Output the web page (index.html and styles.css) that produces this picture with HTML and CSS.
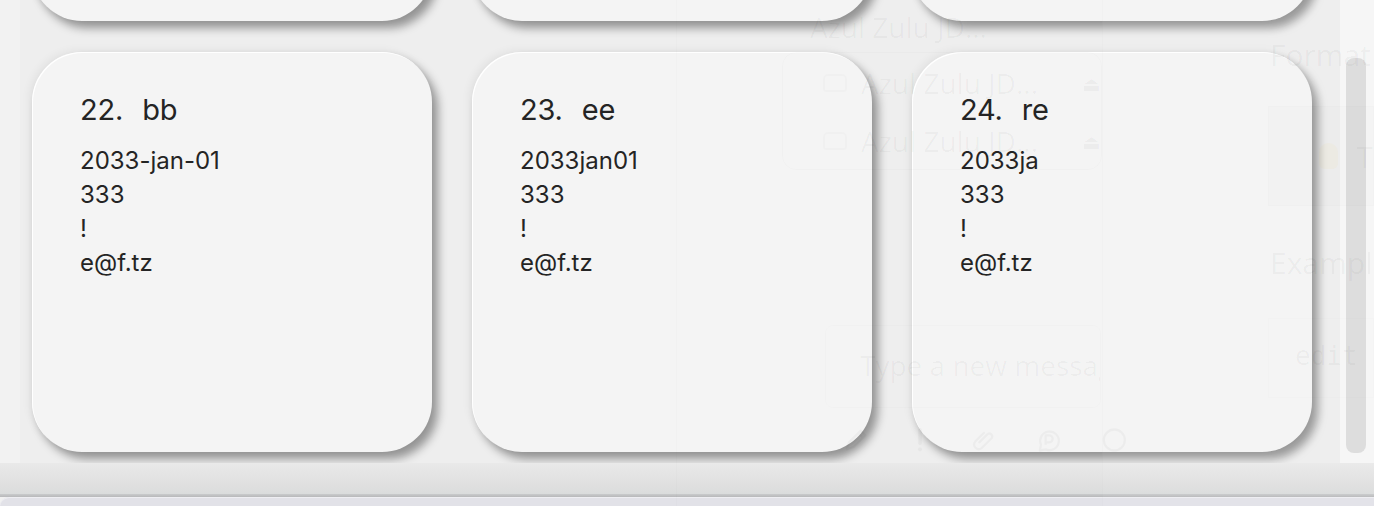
FILE: index.html
```html
<!DOCTYPE html>
<html lang="en">
<head>
<meta charset="utf-8">
<title>Cards</title>
<link rel="stylesheet" href="styles.css">
</head>
<body>
<div class="app">
  <div class="viewport">
    <div class="gutter"></div>
    <div class="scroller">
      <div class="grid">
        <div class="card"></div>
        <div class="card"></div>
        <div class="card"></div>
        <div class="card">
          <div class="title"><span class="num">22.</span><span>bb</span></div>
          <div class="line">2033-jan-01</div>
          <div class="line">333</div>
          <div class="line">!</div>
          <div class="line">e@f.tz</div>
        </div>
        <div class="card">
          <div class="title"><span class="num">23.</span><span>ee</span></div>
          <div class="line">2033jan01</div>
          <div class="line">333</div>
          <div class="line">!</div>
          <div class="line">e@f.tz</div>
        </div>
        <div class="card">
          <div class="title"><span class="num">24.</span><span>re</span></div>
          <div class="line">2033ja</div>
          <div class="line">333</div>
          <div class="line">!</div>
          <div class="line">e@f.tz</div>
        </div>
      </div>
    </div>
    <div class="track"><div class="thumb"></div></div>
  </div>
  <div class="band"></div>
  <div class="rule"></div>
  <div class="tray"></div>

  <div class="ghost">
    <div class="g-divider"></div>
    <div class="g-pane"></div>
    <div class="g-list">
      <div class="g-row g-first">Azul Zulu JD...</div>
      <div class="g-box">
        <div class="g-row"><span class="g-drive"></span>Azul Zulu JD...<span class="g-eject">⏏</span></div>
        <div class="g-row"><span class="g-drive"></span>Azul Zulu JD...<span class="g-eject">⏏</span></div>
      </div>
    </div>
    <div class="g-format">Format</div>
    <div class="g-tip"><span class="g-bulb"></span><span class="g-t">T</span></div>
    <div class="g-example">Example</div>
    <div class="g-edit">edit</div>
    <div class="g-input">Type a new message</div>
    <div class="g-tools">
      <svg viewBox="0 0 24 24" width="28" height="28"><path d="M4 20 L6 14 L16 4 L20 8 L10 18 Z M14 6 L18 10" fill="none" stroke="currentColor" stroke-width="2" stroke-linejoin="round"/></svg>
      <svg viewBox="0 0 24 24" width="28" height="28"><path d="M12 3 L12 15" stroke="currentColor" stroke-width="3" stroke-linecap="round"/><circle cx="12" cy="20" r="1.8" fill="currentColor"/></svg>
      <svg viewBox="0 0 24 24" width="28" height="28"><path d="M8 14 L15 7 a2.5 2.5 0 0 1 3.5 3.5 L10 19 a4 4 0 0 1 -5.6 -5.6 L12 5.8" fill="none" stroke="currentColor" stroke-width="2" stroke-linecap="round"/></svg>
      <svg viewBox="0 0 24 24" width="28" height="28"><path d="M5 21 L6 16 A8 8 0 1 1 10 20 Z M10 16 L10 8 h3 a3 3 0 0 1 0 6 h-3" fill="none" stroke="currentColor" stroke-width="2" stroke-linejoin="round"/></svg>
      <svg viewBox="0 0 24 24" width="28" height="28"><circle cx="14" cy="12" r="9" fill="none" stroke="currentColor" stroke-width="2"/></svg>
    </div>
  </div>
</div>
</body>
</html>
```

FILE: styles.css
```css
* { box-sizing: border-box; }

html, body {
  margin: 0;
  padding: 0;
}

body {
  width: 1374px;
  height: 506px;
  overflow: hidden;
  background: #f1f1f1;
  font-family: Inter, "Liberation Sans", sans-serif;
  color: #242424;
}

.app {
  position: relative;
  display: flex;
  flex-direction: column;
  height: 506px;
}

.viewport {
  display: flex;
  height: 463px;
  flex: none;
}

.gutter {
  width: 20px;
  flex: none;
  background: #f2f2f2;
}

.scroller {
  flex: 1;
  overflow: hidden;
  background: #eeeeee;
  padding-left: 12px;
}

.grid {
  display: grid;
  grid-template-columns: repeat(3, 400px);
  column-gap: 40px;
  row-gap: 31px;
  margin-top: -379px;
}

.card {
  height: 400px;
  background: #f4f4f4;
  border-radius: 50px;
  padding: 41px 48px;
  box-shadow:
    inset 1px 1px 0 rgba(255, 255, 255, 0.95),
    6px 7px 10px rgba(0, 0, 0, 0.38),
    -3px -2px 8px rgba(0, 0, 0, 0.05);
}

.title {
  display: flex;
  gap: 19px;
  font-size: 29px;
  line-height: 34px;
  margin-bottom: 17px;
  letter-spacing: -0.2px;
}

.line {
  font-size: 24px;
  line-height: 34px;
}

.track {
  width: 34px;
  flex: none;
  background: #f6f6f6;
  padding: 58px 4px 10px 6px;
}

.thumb {
  width: 20px;
  height: 395px;
  background: #dcdcdc;
  border-radius: 8px;
}

.band {
  height: 31px;
  flex: none;
  background: linear-gradient(#e9e9e9, #dfdfdf 75%, #dadcdc);
}

.rule {
  height: 3px;
  flex: none;
  background: linear-gradient(#c9cbcc, #b8b8ba);
}

.tray {
  flex: 1;
  background: #e2e2e8;
  border-top-left-radius: 10px;
  box-shadow: inset 0 1px 0 #eeeef2;
}

/* faint ghosted UI that lies over the page */
.ghost {
  position: absolute;
  inset: 0;
  pointer-events: none;
  color: rgba(0, 0, 0, 0.034);
  font-family: "Open Sans", "Noto Sans", sans-serif;
}

.g-divider {
  position: absolute;
  left: 676px;
  top: 0;
  width: 1px;
  height: 506px;
  background: rgba(0, 0, 0, 0.012);
}

.g-pane {
  position: absolute;
  left: 1102px;
  top: 0;
  width: 272px;
  height: 506px;
  background: rgba(255, 255, 255, 0.05);
  border-left: 1px solid rgba(0, 0, 0, 0.012);
}

.g-list {
  position: absolute;
  left: 782px;
  top: 0;
  width: 320px;
}

.g-row {
  display: flex;
  align-items: center;
  gap: 14px;
  height: 56px;
  font-size: 28px;
  white-space: nowrap;
}

.g-first {
  height: 46px;
  padding-left: 28px;
  padding-top: 4px;
  margin-top: 2px;
}

.g-box {
  border: 1px solid rgba(0, 0, 0, 0.015);
  border-radius: 14px;
  padding: 0 0 0 40px;
  margin-top: 4px;
}

.g-box .g-row:first-child {
  height: 60px;
}

.g-drive {
  width: 26px;
  height: 18px;
  border: 2px solid rgba(0, 0, 0, 0.014);
  border-radius: 5px 5px 3px 3px;
}

.g-eject {
  font-size: 20px;
  margin-left: 30px;
}

.g-format {
  position: absolute;
  left: 1270px;
  top: 34px;
  font-size: 30px;
  color: rgba(0, 0, 0, 0.045);
}

.g-tip {
  position: absolute;
  left: 1268px;
  top: 106px;
  width: 106px;
  height: 100px;
  background: rgba(0, 0, 0, 0.006);
  border: 1px solid rgba(0, 0, 0, 0.008);
  display: flex;
  align-items: center;
  gap: 18px;
  padding-left: 50px;
}

.g-bulb {
  width: 20px;
  height: 26px;
  border-radius: 10px 10px 6px 6px;
  background: rgba(230, 200, 80, 0.06);
}

.g-t {
  font-size: 30px;
  color: rgba(0, 0, 0, 0.035);
}

.g-example {
  position: absolute;
  left: 1270px;
  top: 242px;
  font-size: 30px;
  color: rgba(0, 0, 0, 0.042);
}

.g-edit {
  position: absolute;
  left: 1268px;
  top: 318px;
  width: 106px;
  height: 80px;
  padding: 22px 0 0 26px;
  font-family: "DejaVu Sans Mono", monospace;
  font-size: 26px;
  color: rgba(0, 0, 0, 0.04);
  border: 1px solid rgba(0, 0, 0, 0.008);
}

.g-input {
  position: absolute;
  left: 825px;
  top: 325px;
  width: 276px;
  height: 83px;
  padding: 20px 0 0 34px;
  font-size: 28px;
  white-space: nowrap;
  overflow: hidden;
  border: 1px solid rgba(0, 0, 0, 0.012);
  border-radius: 8px;
}

.g-tools {
  position: absolute;
  left: 842px;
  top: 426px;
  display: flex;
  gap: 36px;
  color: rgba(0, 0, 0, 0.03);
}
```
